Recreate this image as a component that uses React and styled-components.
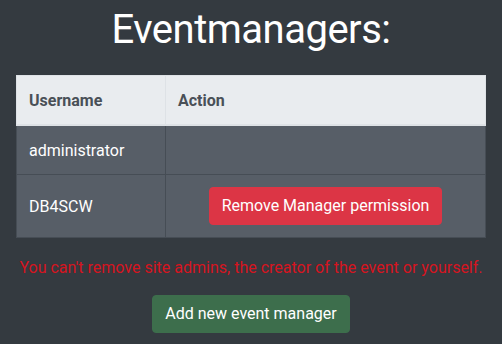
import React from "react";
import styled, { createGlobalStyle } from "styled-components";

const Global = createGlobalStyle`
  html, body { margin: 0; padding: 0; background: #343a40; }
  body { font-family: Roboto, "Noto Sans", sans-serif; font-size: 16px; line-height: 24px; color: #fff; }
`;

const Page = styled.main`
  padding: 6px 16px 0;
  display: flex;
  flex-direction: column;
  align-items: center;
`;

const Title = styled.h1`
  margin: 0;
  font-size: 40px;
  line-height: 48px;
  font-weight: 400;
  letter-spacing: -0.5px;
  color: #fff;
`;

const Table = styled.table`
  margin-top: 21px;
  width: 470px;
  border-collapse: collapse;
`;

const HeadCell = styled.th`
  text-align: left;
  padding: 13px 12px 11px;
  background: #e9ecef;
  color: #495057;
  font-weight: 700;
  border: 1px solid #dee2e6;
  border-bottom: 2px solid #dee2e6;
  width: ${(p) => p.$w || "auto"};
`;

const Row = styled.tr`
  background: #575e67;
`;

const Cell = styled.td`
  padding: ${(p) => (p.$center ? "12px" : "13px 12px 11px")};
  border: 1px solid #464d55;
  color: #fff;
  text-align: ${(p) => (p.$center ? "center" : "left")};
  height: 24px;
`;

const Button = styled.button`
  font-family: inherit;
  font-size: 16px;
  line-height: 24px;
  padding: 6px 12px;
  border: 1px solid ${(p) => p.$bg};
  border-radius: 4px;
  background: ${(p) => p.$bg};
  color: #fff;
  cursor: pointer;
`;

const ErrorText = styled.p`
  margin: 18px 0 0;
  color: #d6141f;
  text-align: center;
`;

const AddWrap = styled.div`
  margin-top: 15px;
`;

export default function App() {
  return (
    <>
      <Global />
      <Page>
        <Title>Eventmanagers:</Title>
        <Table>
          <thead>
            <tr>
              <HeadCell $w="124px">Username</HeadCell>
              <HeadCell>Action</HeadCell>
            </tr>
          </thead>
          <tbody>
            <Row>
              <Cell>administrator</Cell>
              <Cell />
            </Row>
            <Row>
              <Cell>DB4SCW</Cell>
              <Cell $center>
                <Button $bg="#dc3545">Remove Manager permission</Button>
              </Cell>
            </Row>
          </tbody>
        </Table>
        <ErrorText>You can't remove site admins, the creator of the event or yourself.</ErrorText>
        <AddWrap>
          <Button $bg="#3d6e4c">Add new event manager</Button>
        </AddWrap>
      </Page>
    </>
  );
}
